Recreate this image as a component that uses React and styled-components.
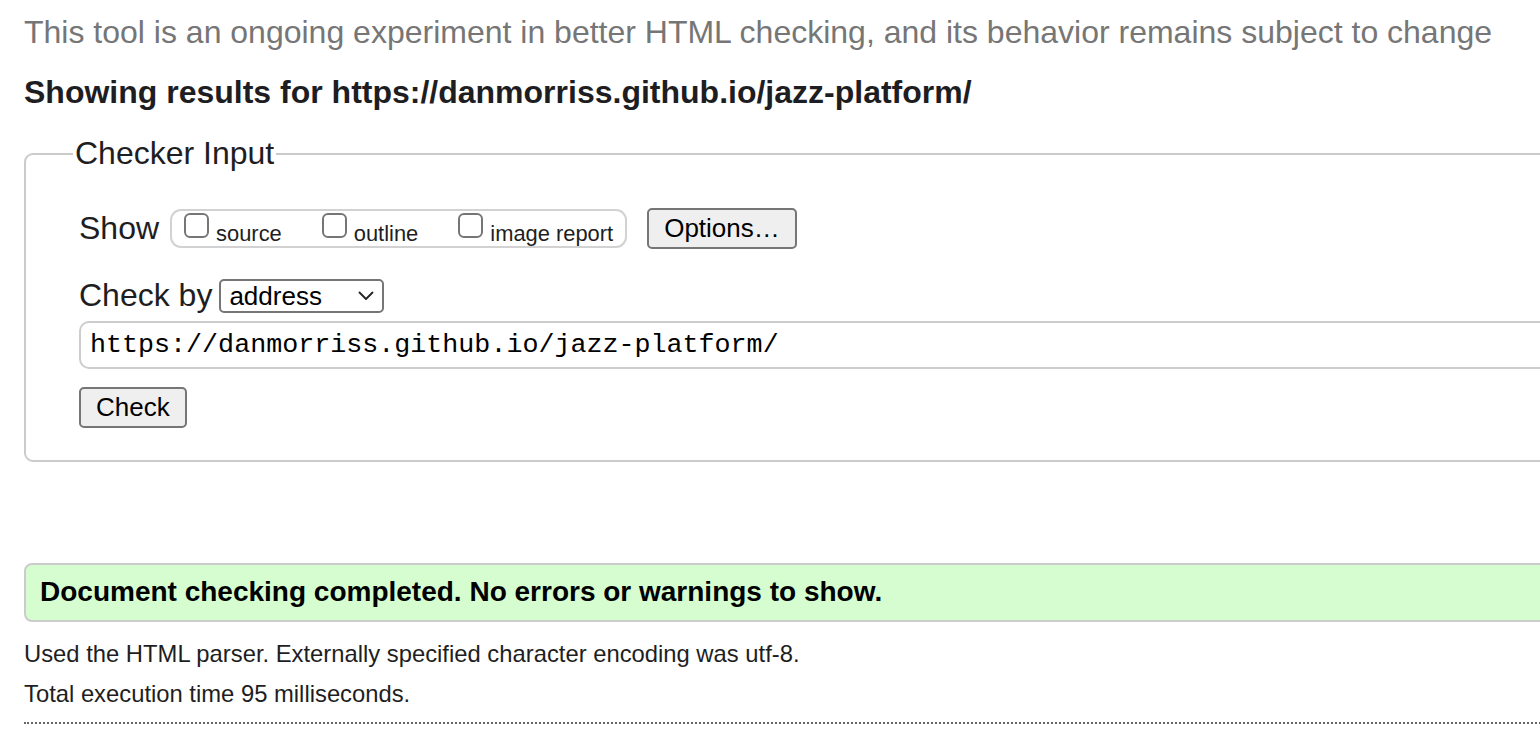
import React from "react";
import styled, { createGlobalStyle } from "styled-components";

const GlobalStyle = createGlobalStyle`
  html, body {
    margin: 0;
    padding: 0;
    background: #ffffff;
    overflow: hidden;
  }
  body {
    font-family: "Liberation Sans", Arial, Helvetica, sans-serif;
    color: #222222;
  }
`;

const Page = styled.div`
  width: 1640px;
  padding: 14px 0 0 24px;
`;

const Intro = styled.p`
  margin: 0;
  font-size: 32px;
  line-height: 37px;
  color: #767676;
`;

const Heading = styled.h2`
  margin: 23px 0 0;
  font-size: 32px;
  line-height: 37px;
  font-weight: bold;
  color: #1e1e22;
`;

const Fieldset = styled.fieldset`
  margin: 24px 0 0;
  padding: 0 0 32px 53px;
  border: 2px solid #cbcbcb;
  border-radius: 9px;
  display: flex;
  flex-direction: column;
`;

const Legend = styled.legend`
  margin-left: -6px;
  padding: 0 2px;
  font-size: 32px;
  line-height: 37px;
  color: #1e1e22;
`;

const Row = styled.div`
  display: flex;
  align-items: center;
  gap: ${(p) => p.$gap || 0}px;
  margin-top: ${(p) => p.$top || 0}px;
`;

const Label = styled.span`
  font-size: 32px;
  line-height: 37px;
  color: #1e1e22;
`;

const ToggleGroup = styled.div`
  display: flex;
  align-items: center;
  height: 35px;
  margin-left: 11px;
  padding: 0 12px 0 12px;
  border: 2px solid #d2d2d2;
  border-radius: 11px;
  gap: 40px;
`;

const Toggle = styled.label`
  display: flex;
  align-items: flex-end;
  gap: 7px;
  font-size: 21.9px;
  color: #1e1e22;
`;

const Box = styled.input.attrs({ type: "checkbox" })`
  appearance: none;
  margin: 0 0 7px 0;
  width: 25px;
  height: 25px;
  border: 2px solid #767676;
  border-radius: 6px;
  background: #ffffff;
`;

const ToggleText = styled.span`
  line-height: 25px;
  transform: translateY(1px);
`;

const Button = styled.button`
  font-family: "Liberation Sans", Arial, Helvetica, sans-serif;
  font-size: 26px;
  line-height: 30px;
  color: #000000;
  background: #efefef;
  border: 2px solid #767676;
  border-radius: 5px;
  padding: 3px ${(p) => p.$pad || 14}px 4px;
  margin-left: ${(p) => p.$left || 0}px;
  cursor: pointer;
`;

const SelectWrap = styled.div`
  position: relative;
  display: flex;
`;

const Select = styled.select`
  appearance: none;
  width: 165px;
  height: 34px;
  padding: 0 0 0 8px;
  font-family: "Liberation Sans", Arial, Helvetica, sans-serif;
  font-size: 26px;
  color: #000000;
  background: #ffffff;
  border: 2px solid #767676;
  border-radius: 5px;
`;

const Chevron = styled.svg`
  position: absolute;
  right: 10px;
  top: 12px;
  pointer-events: none;
`;

const UrlInput = styled.input`
  box-sizing: border-box;
  width: 1520px;
  height: 48px;
  margin-top: 7px;
  padding: 0 9px;
  font-family: "Liberation Mono", Menlo, monospace;
  font-size: 26.7px;
  color: #000000;
  border: 2px solid #cdcdcd;
  border-radius: 10px;
  outline: none;
`;

const Result = styled.div`
  margin-top: 101px;
  padding: 11px 14px 12px;
  background: #d5fdd0;
  border: 2px solid #cccccc;
  border-radius: 8px;
  font-size: 28px;
  line-height: 32px;
  font-weight: bold;
  color: #000000;
`;

const Note = styled.p`
  margin: ${(p) => p.$top}px 0 0;
  font-size: 23.8px;
  line-height: 27px;
  color: #1e1e22;
`;

const Divider = styled.hr`
  margin: 15px 0 0;
  border: 0;
  border-top: 2px dotted #666666;
  height: 0;
`;

export default function App() {
  return (
    <>
      <GlobalStyle />
      <Page>
        <Intro>
          This tool is an ongoing experiment in better HTML checking, and its
          behavior remains subject to change
        </Intro>
        <Heading>
          Showing results for https://danmorriss.github.io/jazz-platform/
        </Heading>
        <Fieldset>
          <Legend>Checker Input</Legend>
          <Row $top={36}>
            <Label>Show</Label>
            <ToggleGroup>
              {["source", "outline", "image report"].map((t) => (
                <Toggle key={t}>
                  <Box />
                  <ToggleText>{t}</ToggleText>
                </Toggle>
              ))}
            </ToggleGroup>
            <Button $pad={15} $left={20}>
              Options…
            </Button>
          </Row>
          <Row $top={28} $gap={7}>
            <Label>Check by</Label>
            <SelectWrap>
              <Select defaultValue="address">
                <option value="address">address</option>
                <option value="file">file upload</option>
                <option value="text">text input</option>
              </Select>
              <Chevron width="16" height="10" viewBox="0 0 16 10">
                <path
                  d="M1.5 1.5 L8 8 L14.5 1.5"
                  fill="none"
                  stroke="#222"
                  strokeWidth="1.8"
                  strokeLinecap="round"
                  strokeLinejoin="round"
                />
              </Chevron>
            </SelectWrap>
          </Row>
          <UrlInput
            defaultValue="https://danmorriss.github.io/jazz-platform/"
            readOnly
          />
          <Row $top={18}>
            <Button $pad={15}>Check</Button>
          </Row>
        </Fieldset>
        <Result>
          Document checking completed. No errors or warnings to show.
        </Result>
        <Note $top={18}>
          Used the HTML parser. Externally specified character encoding was
          utf-8.
        </Note>
        <Note $top={13}>Total execution time 95 milliseconds.</Note>
        <Divider />
      </Page>
    </>
  );
}
